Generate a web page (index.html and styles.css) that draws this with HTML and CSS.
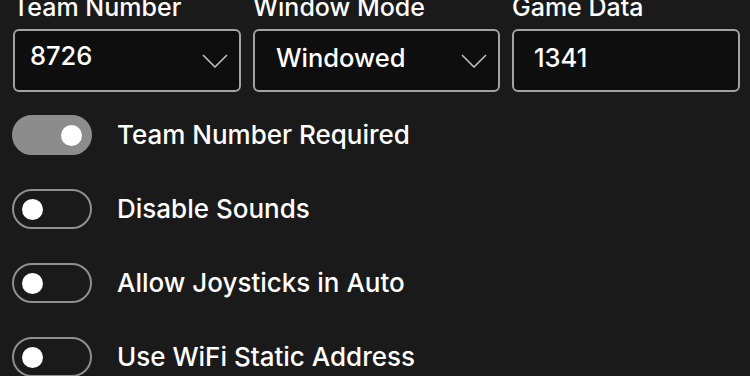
FILE: index.html
```html
<!DOCTYPE html>
<html>
<head>
<meta charset="utf-8">
<link rel="stylesheet" href="styles.css">
</head>
<body>
<div class="page">
  <div class="fields">
    <div class="field">
      <div class="label">Team Number</div>
      <div class="box box-team">
        <span class="value value-team">8726</span>
        <svg class="chev" width="26" height="14" viewBox="0 0 26 14"><polyline points="1,1 13,13 25,1" fill="none" stroke="#bdbdbd" stroke-width="1.6"/></svg>
      </div>
    </div>
    <div class="field">
      <div class="label">Window Mode</div>
      <div class="box box-mode">
        <span class="value">Windowed</span>
        <svg class="chev" width="26" height="14" viewBox="0 0 26 14"><polyline points="1,1 13,13 25,1" fill="none" stroke="#bdbdbd" stroke-width="1.6"/></svg>
      </div>
    </div>
    <div class="field">
      <div class="label">Game Data</div>
      <div class="box box-data">
        <span class="value">1341</span>
      </div>
    </div>
  </div>
  <div class="toggles">
    <div class="row">
      <div class="switch on"><span class="knob"></span></div>
      <span class="row-label">Team Number Required</span>
    </div>
    <div class="row">
      <div class="switch"><span class="knob"></span></div>
      <span class="row-label">Disable Sounds</span>
    </div>
    <div class="row">
      <div class="switch"><span class="knob"></span></div>
      <span class="row-label">Allow Joysticks in Auto</span>
    </div>
    <div class="row">
      <div class="switch"><span class="knob"></span></div>
      <span class="row-label">Use WiFi Static Address</span>
    </div>
  </div>
</div>
</body>
</html>
```
FILE: styles.css
```css
html, body {
  margin: 0;
  padding: 0;
  background: #1a1a1a;
  overflow: hidden;
}
body {
  width: 750px;
  height: 376px;
  font-family: Inter, Roboto, "Liberation Sans", sans-serif;
  font-weight: 450;
  color: #ffffff;
}
.page {
  padding: 0 11px 0 12px;
  margin-top: -8px;
}
.fields {
  display: grid;
  grid-template-columns: 228px 247px 228px;
  column-gap: 12px;
  padding-left: 1px;
}
.label {
  font-size: 25px;
  line-height: 30px;
  height: 30px;
  margin-bottom: 7px;
  white-space: nowrap;
}
.box {
  box-sizing: border-box;
  height: 63px;
  border: 2px solid #a3a3a3;
  border-radius: 6px;
  background: #0e0e0e;
  display: flex;
  align-items: center;
  justify-content: space-between;
  padding: 0 11px 0 21px;
}
.box-team { padding-left: 15px; }
.box-data { padding-left: 20px; }
.value {
  font-size: 25.5px;
  line-height: 30px;
  margin-bottom: 6px;
}
.value-team { margin-bottom: 10px; }
.chev { display: block; }
.toggles {
  display: flex;
  flex-direction: column;
  gap: 34px;
  margin-top: 23px;
}
.row {
  display: flex;
  align-items: center;
  gap: 25px;
}
.switch {
  box-sizing: border-box;
  width: 80px;
  height: 40px;
  border-radius: 20px;
  border: 2px solid #8f8f8f;
  display: flex;
  align-items: center;
  padding-left: 8px;
  flex-shrink: 0;
}
.switch.on {
  background: #8c8c8c;
  border-color: #8c8c8c;
  justify-content: flex-end;
  padding: 0 8px 0 0;
}
.knob {
  width: 21px;
  height: 21px;
  border-radius: 50%;
  background: #ffffff;
  display: block;
}
.row-label {
  font-size: 26px;
  line-height: 32px;
  white-space: nowrap;
}
```
